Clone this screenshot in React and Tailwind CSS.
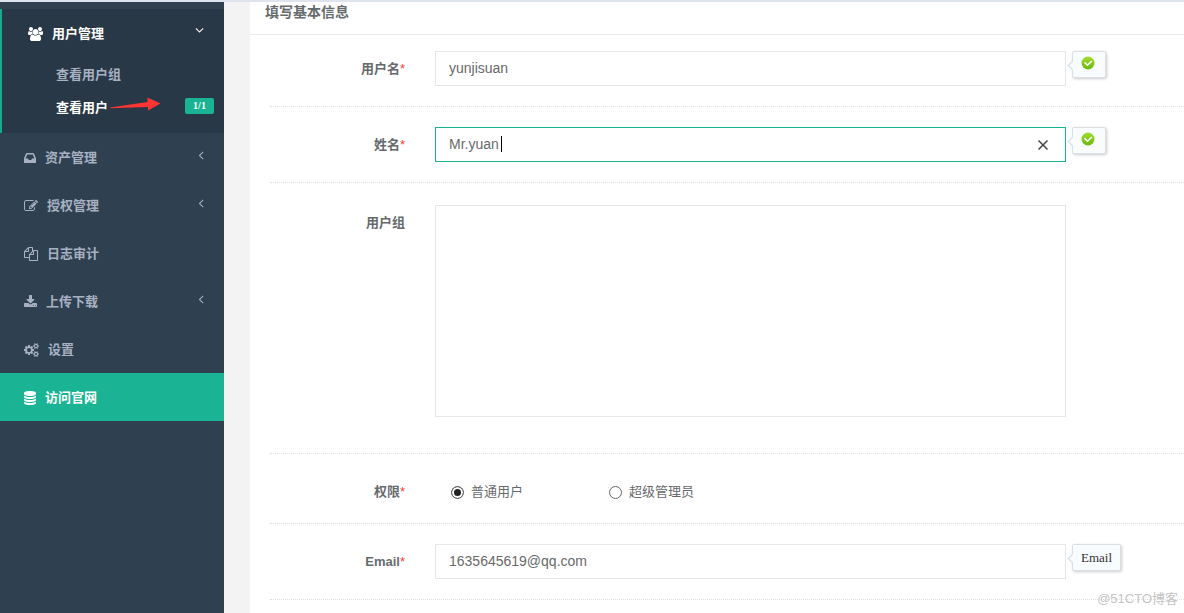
import React, { useState } from "react";

const icons = {
    users: {
        box: "64 0 1920 1792",
        size: "w-[15px]",
        d: "M657 896q-162 5-265 128h-134q-82 0-138-40.5t-56-118.5q0-353 124-353 6 0 43.5 21t97.5 42.5 119 21.5q67 0 133-23-5 37-5 66 0 159 90 256.5zm1071 637q0 120-73 189.5t-194 69.5h-874q-121 0-194-69.5t-73-189.5q0-53 3.5-103.5t14-109 26.5-108.5 43-97.5 62-81 85.5-53.5 111.5-20q10 0 43 21.5t73 48 107 48 135 21.5 135-21.5 107-48 73-48 43-21.5q61 0 111.5 20t85.5 53.5 62 81 43 97.5 26.5 108.5 14 109 3.5 103.5zm-1024-1277q0 106-75 181t-181 75-181-75-75-181 75-181 181-75 181 75 75 181zm704 384q0 159-112.5 271.5t-271.5 112.5-271.5-112.5-112.5-271.5 112.5-271.5 271.5-112.5 271.5 112.5 112.5 271.5zm576 225q0 78-56 118.5t-138 40.5h-134q-103-123-265-128 90-97.5 90-256.5 0-29-5-66 66 23 133 23 59 0 119-21.5t97.5-42.5 43.5-21q124 0 124 353zm-128-609q0 106-75 181t-181 75-181-75-75-181 75-181 181-75 181 75 75 181z"
    },
    inbox: {
        box: "128 0 1536 1792",
        size: "w-3",
        d: "M1151 960h316q-1-3-2.5-8t-2.5-8l-212-496h-708l-212 496q-1 2-2.5 8t-2.5 8h316l95 192h320zm513 30v482q0 26-19 45t-45 19h-1408q-26 0-45-19t-19-45v-482q0-62 25-123l238-552q10-25 36.5-42t52.5-17h832q26 0 52.5 17t36.5 42l238 552q25 61 25 123z"
    },
    edit: {
        box: "0 0 1792 1792",
        size: "w-3.5",
        d: "M888 1184l116-116-152-152-116 116v56h96v96h56zm440-720q-16-16-33 1l-350 350q-17 17-1 33t33-1l350-350q17-17 1-33zm80 594v190q0 119-84.5 203.5t-203.5 84.5h-832q-119 0-203.5-84.5t-84.5-203.5v-832q0-119 84.5-203.5t203.5-84.5h832q63 0 117 25 15 7 18 23 3 17-9 29l-49 49q-14 14-32 8-23-6-45-6h-832q-66 0-113 47t-47 113v832q0 66 47 113t113 47h832q66 0 113-47t47-113v-126q0-13 9-22l64-64q15-15 35-7t20 29zm-96-738l288 288-672 672h-288v-288zm444 132l-92 92-288-288 92-92q28-28 68-28t68 28l152 152q28 28 28 68t-28 68z"
    },
    files: {
        box: "0 0 1792 1792",
        size: "w-3.5",
        d: "M1696 384q40 0 68 28t28 68v1216q0 40-28 68t-68 28h-960q-40 0-68-28t-28-68v-288h-544q-40 0-68-28t-28-68v-672q0-40 20-88t48-76l408-408q28-28 76-48t88-20h416q40 0 68 28t28 68v328q68-40 128-40h416zm-544 213l-299 299h299v-299zm-640-384l-299 299h299v-299zm196 647l316-316v-416h-384v416q0 40-28 68t-68 28h-416v640h512v-256q0-40 20-88t48-76zm956 804v-1152h-384v416q0 40-28 68t-68 28h-416v640h896z"
    },
    download: {
        box: "64 0 1664 1792",
        size: "w-[13px]",
        d: "M1344 1344q0-26-19-45t-45-19-45 19-19 45 19 45 45 19 45-19 19-45zm256 0q0-26-19-45t-45-19-45 19-19 45 19 45 45 19 45-19 19-45zm128-224v320q0 40-28 68t-68 28h-1472q-40 0-68-28t-28-68v-320q0-40 28-68t68-28h465l135 136q58 56 136 56t136-56l136-136h464q40 0 68 28t28 68zm-325-569q17 41-14 70l-448 448q-18 19-45 19t-45-19l-448-448q-31-29-14-70 17-39 59-39h256v-448q0-26 19-45t45-19h256q26 0 45 19t19 45v448h256q42 0 59 39z"
    },
    cogs: {
        box: "0 0 1920 1792",
        size: "w-[15px]",
        d: "M896 896q0-106-75-181t-181-75-181 75-75 181 75 181 181 75 181-75 75-181zm768 512q0-52-38-90t-90-38-90 38-38 90q0 53 37.5 90.5t90.5 37.5 90.5-37.5 37.5-90.5zm0-1024q0-52-38-90t-90-38-90 38-38 90q0 53 37.5 90.5t90.5 37.5 90.5-37.5 37.5-90.5zm-384 421v185q0 10-7 19.5t-16 10.5l-155 24q-11 35-32 76 34 48 90 115 7 11 7 20 0 12-7 19-23 30-82.5 89.5t-78.5 59.5q-11 0-21-7l-115-90q-37 19-77 31-11 108-23 155-7 24-30 24h-186q-11 0-20-7.5t-10-17.5l-23-153q-34-10-75-31l-118 89q-7 7-20 7-11 0-21-8-144-133-144-160 0-9 7-19 10-14 41-53t47-61q-23-44-35-82l-152-24q-10-1-17-9.5t-7-19.5v-185q0-10 7-19.5t16-10.5l155-24q11-35 32-76-34-48-90-115-7-11-7-20 0-12 7-20 22-30 82-89t79-59q11 0 21 7l115 90q34-18 77-32 11-108 23-154 7-24 30-24h186q11 0 20 7.5t10 17.5l23 153q34 10 75 31l118-89q8-7 20-7 11 0 21 8 144 133 144 160 0 8-7 19-12 16-42 54t-45 60q23 48 34 82l152 23q10 2 17 10.5t7 19.5zm640 533v140q0 16-149 31-12 27-30 52 51 113 51 138 0 4-4 7-122 71-124 71-8 0-46-47t-52-68q-20 2-30 2t-30-2q-14 21-52 68t-46 47q-2 0-124-71-4-3-4-7 0-25 51-138-18-25-30-52-149-15-149-31v-140q0-16 149-31 13-29 30-52-51-113-51-138 0-4 4-7 4-2 35-20t59-34 30-16q8 0 46 46.5t52 67.5q20-2 30-2t30 2q51-71 92-112l6-2q4 0 124 70 4 3 4 7 0 25-51 138 17 23 30 52 149 15 149 31zm0-1024v140q0 16-149 31-12 27-30 52 51 113 51 138 0 4-4 7-122 71-124 71-8 0-46-47t-52-68q-20 2-30 2t-30-2q-14 21-52 68t-46 47q-2 0-124-71-4-3-4-7 0-25 51-138-18-25-30-52-149-15-149-31v-140q0-16 149-31 13-29 30-52-51-113-51-138 0-4 4-7 4-2 35-20t59-34 30-16q8 0 46 46.5t52 67.5q20-2 30-2t30 2q51-71 92-112l6-2q4 0 124 70 4 3 4 7 0 25-51 138 17 23 30 52 149 15 149 31z"
    },
    database: {
        box: "128 0 1536 1792",
        size: "w-3",
        d: "M896 768q237 0 443-43t325-127v170q0 69-103 128t-280 93.5-385 34.5-385-34.5-280-93.5-103-128v-170q119 84 325 127t443 43zm0 768q237 0 443-43t325-127v170q0 69-103 128t-280 93.5-385 34.5-385-34.5-280-93.5-103-128v-170q119 84 325 127t443 43zm0-384q237 0 443-43t325-127v170q0 69-103 128t-280 93.5-385 34.5-385-34.5-280-93.5-103-128v-170q119 84 325 127t443 43zm0-1152q208 0 385 34.5t280 93.5 103 128v128q0 69-103 128t-280 93.5-385 34.5-385-34.5-280-93.5-103-128v-128q0-69 103-128t280-93.5 385-34.5z"
    },
    angleLeft: {
        box: "544 0 704 1792",
        size: "w-[6px]",
        d: "M1203 544q0 13-10 23l-393 393 393 393q10 10 10 23t-10 23l-50 50q-10 10-23 10t-23-10l-466-466q-10-10-10-23t10-23l466-466q10-10 23-10t23 10l50 50q10 10 10 23z"
    },
    angleDown: {
        box: "320 0 1152 1792",
        size: "w-[9px]",
        d: "M1395 736q0 13-10 23l-466 466q-10 10-23 10t-23-10l-466-466q-10-10-10-23t10-23l50-50q10-10 23-10t23 10l393 393 393-393q10-10 23-10t23 10l50 50q10 10 10 23z"
    }
};

const menu = [
    { text: "资产管理", icon: "inbox", arrow: true },
    { text: "授权管理", icon: "edit", arrow: true },
    { text: "日志审计", icon: "files" },
    { text: "上传下载", icon: "download", arrow: true },
    { text: "设置", icon: "cogs" },
    { text: "访问官网", icon: "database", special: true }
];

function Icon({ name }) {
    const icon = icons[name];
    return (
        <svg viewBox={icon.box} className={`h-3.5 shrink-0 ${icon.size}`} fill="currentColor" aria-hidden="true">
            <path d={icon.d} />
        </svg>
    );
}

function Sidebar() {
    return (
        <nav className="w-56 shrink-0 bg-[#2f4050] pt-[7px] text-[13px] font-bold text-[#a7b1c2]">
            <div className="border-l-2 border-[#19aa8d] bg-[#293846] pb-[9px] text-white">
                <a href="#users" className="flex h-[49px] items-center pl-[26px] pr-5">
                    <Icon name="users" />
                    <span className="ml-[9px] flex-1">用户管理</span>
                    <span className="pb-2"><Icon name="angleDown" /></span>
                </a>
                <a href="#groups" className="flex h-[33px] items-center pl-[54px] text-[#a7b1c2]">查看用户组</a>
                <a href="#list" className="relative flex h-[33px] items-center justify-between pl-[54px] pr-2.5">
                    查看用户
                    <svg viewBox="0 0 51 14" className="absolute left-[108px] top-[6px] h-3.5 w-[51px]" fill="#fb3434" aria-hidden="true">
                        <path d="M0 10.4L37.500 5V0.500L50.500 6.500L38 13.500V10L0 11.200Z" />
                    </svg>
                    <span className="mb-[3px] h-4 w-[29px] rounded-xs bg-[#1ab394] text-center font-['Liberation_Serif',serif] text-[10px] leading-4">1/1</span>
                </a>
            </div>
            {menu.map((item) => (
                <a
                    key={item.text}
                    href="#menu"
                    className={`flex h-12 items-center pl-6 pr-5 pt-0.5 ${item.special ? "bg-[#1ab394] text-white" : ""}`}
                >
                    <Icon name={item.icon} />
                    <span className="ml-[9px] flex-1">{item.text}</span>
                    {item.arrow && <span className="pb-1.5"><Icon name="angleLeft" /></span>}
                </a>
            ))}
        </nav>
    );
}

function Tip({ children }) {
    return (
        <div className="relative ml-1.5 h-[27px] self-start rounded-xs border border-[#dcdfe2] bg-[#f8fcff] px-2 shadow-[1px_1px_3px_rgba(0,0,0,0.2)]">
            <span className="absolute -left-[4px] top-[10px] h-[7px] w-[7px] rotate-45 border-b border-l border-[#d3dce2] bg-[#f8fcff]" />
            {children}
        </div>
    );
}

function OkTip() {
    return (
        <Tip>
            <svg viewBox="0 0 14 14" className="mr-0.5 mt-1 h-3.5 w-3.5" role="img" aria-label="ok">
                <defs>
                    <linearGradient id="ok" x1="0" y1="0" x2="0" y2="1">
                        <stop offset="0" stopColor="#a6dc2c" />
                        <stop offset="1" stopColor="#68b80e" />
                    </linearGradient>
                </defs>
                <circle cx="7" cy="7" r="6.5" fill="url(#ok)" />
                <path d="M3.500 6.200L6.500 9.200L10.800 5" fill="none" stroke="#fff" strokeWidth="1.600" />
            </svg>
        </Tip>
    );
}

function Row({ id, label, required, tip, className = "py-5", children }) {
    return (
        <div className={`flex border-b border-dotted border-[#dfe2e4] ${className}`}>
            <label htmlFor={id} className="w-[135px] shrink-0 pt-2 text-right text-[13px] leading-5 font-bold">
                {label}
                {required && <span className="font-normal text-[#ff3b3b]">*</span>}
            </label>
            <div className="relative ml-[30px] min-w-0 flex-1">{children}</div>
            <div className="flex w-[118px] shrink-0">{tip}</div>
        </div>
    );
}

const inputClass = "block h-[35px] w-full border border-[#e5e6e7] bg-white px-[13px] pb-0.5 text-sm text-[#676a6c] outline-none";
const focusedClass = "block h-[35px] w-full bg-white px-3.5 pb-0.5 text-sm text-[#676a6c] caret-transparent shadow-[inset_0_0_0_1px_#1ab394] outline-none";
const radioClass = "h-[13px] w-[13px] appearance-none rounded-full border border-[#666] bg-white checked:bg-[#222] checked:shadow-[inset_0_0_0_2px_#fff]";

function App() {
    const [form, setForm] = useState({
        username: "yunjisuan",
        name: "Mr.yuan",
        role: "CU",
        email: "1635645619@qq.com"
    });

    const handleChange = (e) => {
        setForm((prev) => ({ ...prev, [e.target.name]: e.target.value }));
    };

    return (
        <div className="relative flex min-h-screen border-t-2 border-[#dfe3f0] bg-[#f3f3f4] font-['Liberation_Sans','Noto_Sans_CJK_SC',sans-serif] text-[#676a6c]">
            <Sidebar />
            <main className="ml-[26px] min-w-0 flex-1 bg-white">
                <h5 className="border-b border-[#e7eaec] pb-3 pl-[15px] text-sm leading-5 font-bold">填写基本信息</h5>
                <form className="pl-5 pt-px" onSubmit={(e) => e.preventDefault()}>
                    <Row id="username" label="用户名" required className="pt-[15px] pb-5" tip={<OkTip />}>
                        <input id="username" name="username" value={form.username} onChange={handleChange} className={inputClass} />
                    </Row>
                    <Row id="name" label="姓名" required tip={<OkTip />}>
                        <input id="name" name="name" value={form.name} onChange={handleChange} className={focusedClass} />
                        <span className="absolute left-[66px] top-[9px] h-4 w-px bg-black" />
                        <button
                            type="button"
                            aria-label="清除"
                            className="absolute right-[18px] top-[13px] h-2.5 w-2.5"
                            onClick={() => setForm((prev) => ({ ...prev, name: "" }))}
                        >
                            <svg viewBox="0 0 10 10" className="h-2.5 w-2.5" stroke="#444" strokeWidth="1.500">
                                <path d="M0.500 0.500L9.500 9.500M9.500 0.500L0.500 9.500" />
                            </svg>
                        </button>
                    </Row>
                    <Row id="groups" label="用户组" className="pt-[22px] pb-9">
                        <select id="groups" multiple className="block h-[212px] w-full border border-[#e5e6e7] bg-white outline-none" />
                    </Row>
                    <Row id="role-cu" label="权限" required className="pt-5 pb-[21px]">
                        <div className="flex pl-4 pt-2 text-[13px] leading-5">
                            <label className="flex w-[158px] items-center gap-[7px]">
                                <input id="role-cu" type="radio" name="role" value="CU" checked={form.role === "CU"} onChange={handleChange} className={radioClass} />
                                普通用户
                            </label>
                            <label className="flex items-center gap-[7px]">
                                <input type="radio" name="role" value="SU" checked={form.role === "SU"} onChange={handleChange} className={radioClass} />
                                超级管理员
                            </label>
                        </div>
                    </Row>
                    <Row
                        id="email"
                        label="Email"
                        required
                        tip={<Tip><span className="font-['Liberation_Serif',serif] text-[13px] leading-6 text-[#333]">Email</span></Tip>}
                    >
                        <input id="email" name="email" value={form.email} onChange={handleChange} className={inputClass} />
                    </Row>
                </form>
            </main>
            <span className="absolute bottom-1 right-1.5 text-[13px] leading-5 text-[#c4c4c4]">@51CTO博客</span>
        </div>
    );
}

export default App;
